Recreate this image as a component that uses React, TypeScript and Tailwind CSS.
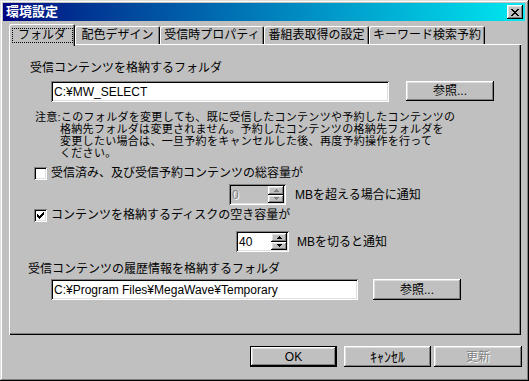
import type { ReactNode } from 'react'

const FONT = "font-['Liberation_Sans','Noto_Sans_CJK_JP',sans-serif]"
const RAISED =
  'shadow-[inset_-1px_-1px_#000,inset_1px_1px_#fff,inset_-2px_-2px_#808080,inset_2px_2px_#dfdfdf]'
const SUNKEN =
  'shadow-[inset_1px_1px_#808080,inset_-1px_-1px_#fff,inset_2px_2px_#000,inset_-2px_-2px_#dfdfdf]'
const DISABLED_TEXT = 'text-[#808080] [text-shadow:1px_1px_0_#fff]'

const TABS: Array<{ label: string; width: string; selected?: boolean }> = [
  { label: 'フォルダ', width: 'w-[66px]', selected: true },
  { label: '配色デザイン', width: 'w-[85px]' },
  { label: '受信時プロパティ', width: 'w-[104px]' },
  { label: '番組表取得の設定', width: 'w-[105px]' },
  { label: 'キーワード検索予約', width: 'w-[116px]' },
]

const NOTE_LINES = [
  '格納先フォルダは変更されません。予約したコンテンツの格納先フォルダを',
  '変更したい場合は、一旦予約をキャンセルした後、再度予約操作を行って',
  'ください。',
]

export default function App() {
  return (
    <div
      className={`${FONT} flex h-[381px] w-[529px] flex-col bg-[#c0c0c0] pl-[3px] pr-[4px] pt-[3px] text-[12px] text-black shadow-[inset_-1px_-1px_#000,inset_1px_1px_#dfdfdf,inset_-2px_-2px_#808080,inset_2px_2px_#fff]`}
    >
      <TitleBar />

      <div className="pl-[6px]">
        <div className="mt-[3px] flex h-[20px] items-end">
          {TABS.map((tab) => (
            <Tab key={tab.label} {...tab} />
          ))}
        </div>

        <div className="h-[291px] w-[512px] bg-[#c0c0c0] shadow-[inset_1px_1px_#fff,inset_-1px_-1px_#000,inset_-2px_-2px_#808080]">
          <div className="pl-[21px] pt-[17px] leading-[14px]">受信コンテンツを格納するフォルダ</div>

          <div className="mt-[6px] flex pl-[42px]">
            <TextField value="C:¥MW_SELECT" width="w-[338px]" />
            <Button label="参照..." className="ml-[17px] w-[88px] h-[20px]" />
          </div>

          <div className="mt-[9px] text-[11px] leading-[12px] tracking-[0.3px] whitespace-nowrap">
            <div className="pl-[26px]">注意:このフォルダを変更しても、既に受信したコンテンツや予約したコンテンツの</div>
            {NOTE_LINES.map((line) => (
              <div key={line} className="pl-[51px]">
                {line}
              </div>
            ))}
          </div>

          <div className="mt-[7px] flex h-[14px] items-center pl-[25px]">
            <Checkbox />
            <span className="ml-[4px] leading-[14px]">受信済み、及び受信予約コンテンツの総容量が</span>
          </div>

          <div className="mt-[4px] flex items-center pl-[220px]">
            <Spinner value="0" disabled editWidth="w-[37px]" />
            <span className="ml-[9px]">MBを超える場合に通知</span>
          </div>

          <div className="mt-[3px] flex h-[14px] items-center pl-[25px]">
            <Checkbox checked />
            <span className="ml-[4px] leading-[14px]">コンテンツを格納するディスクの空き容量が</span>
          </div>

          <div className="mt-[9px] flex items-center pl-[227px]">
            <Spinner value="40" editWidth="w-[33px]" />
            <span className="ml-[8px]">MBを切ると通知</span>
          </div>

          <div className="mt-[10px] pl-[19px] leading-[14px]">受信コンテンツの履歴情報を格納するフォルダ</div>

          <div className="mt-[3px] flex pl-[42px]">
            <TextField value="C:¥Program Files¥MegaWave¥Temporary" width="w-[307px]" />
            <Button label="参照..." className="ml-[15px] w-[88px] h-[21px]" />
          </div>
        </div>

        <div className="mt-[11px] flex w-[513px] justify-end">
          <div className="flex h-[21px] w-[87px] items-center justify-center border border-black">
            <Button label="OK" className="h-full w-full" />
          </div>
          <Button label="ｷｬﾝｾﾙ" className="ml-[7px] h-[21px] w-[87px] text-[14px]" />
          <Button label="更新" disabled className="ml-[3px] h-[21px] w-[88px]" />
        </div>
      </div>
    </div>
  )
}

function TitleBar() {
  return (
    <div className="flex h-[18px] items-center justify-between bg-linear-to-r from-[#000080] to-[#10e8f0] pl-[3px] pr-[2px]">
      <span className="text-[13px] leading-[18px] font-bold text-white">環境設定</span>
      <div className={`${RAISED} flex h-[14px] w-[16px] items-center justify-center bg-[#c0c0c0]`}>
        <svg width="8" height="7" viewBox="0 0 8 7" shapeRendering="crispEdges">
          <path
            d="M0 0h2v1H0zM6 0h2v1H6zM1 1h2v1H1zM5 1h2v1H5zM2 2h4v1H2zM3 3h2v1H3zM2 4h4v1H2zM1 5h2v1H1zM5 5h2v1H5zM0 6h2v1H0zM6 6h2v1H6z"
            fill="#000"
          />
        </svg>
      </div>
    </div>
  )
}

function Tab({ label, width, selected }: { label: string; width: string; selected?: boolean }) {
  if (selected) {
    return (
      <div
        className={`${width} relative z-10 -mb-[2px] flex h-[22px] items-start justify-center rounded-t-[2px] bg-[#c0c0c0] pt-[4px] shadow-[inset_1px_1px_#fff,inset_-1px_0_#000,inset_-2px_0_#808080]`}
      >
        <span className="flex h-[15px] w-[61px] items-center justify-center border border-dotted border-black leading-[13px]">
          {label}
        </span>
      </div>
    )
  }

  return (
    <div
      className={`${width} flex h-[18px] items-center justify-center rounded-t-[2px] bg-[#c0c0c0] shadow-[inset_1px_1px_#fff,inset_-1px_0_#000,inset_-2px_0_#808080]`}
    >
      <span className="leading-[14px]">{label}</span>
    </div>
  )
}

function TextField({ value, width }: { value: string; width: string }) {
  return (
    <div className={`${SUNKEN} ${width} flex h-[21px] items-center bg-white pl-[3px] leading-[14px]`}>
      {value}
    </div>
  )
}

function Button({ label, className, disabled }: { label: ReactNode; className?: string; disabled?: boolean }) {
  return (
    <div
      className={`${RAISED} flex items-center justify-center bg-[#c0c0c0] leading-[14px] ${disabled ? DISABLED_TEXT : ''} ${className ?? ''}`}
    >
      {label}
    </div>
  )
}

function Checkbox({ checked }: { checked?: boolean }) {
  return (
    <div className={`${SUNKEN} flex h-[13px] w-[13px] shrink-0 items-center justify-center bg-white`}>
      {checked ? (
        <svg width="7" height="7" viewBox="0 0 7 7" shapeRendering="crispEdges">
          <path d="M6 0h1v3H6zM5 1h1v3H5zM4 2h1v3H4zM0 2h1v3H0zM1 3h1v3H1zM2 4h1v3H2zM3 3h1v3H3z" fill="#000" />
        </svg>
      ) : null}
    </div>
  )
}

function Spinner({ value, disabled, editWidth }: { value: string; disabled?: boolean; editWidth: string }) {
  return (
    <div className={`${SUNKEN} flex h-[21px] p-[2px] ${disabled ? 'bg-[#c0c0c0]' : 'bg-white'}`}>
      <div className={`${editWidth} flex items-center pl-[1px] leading-[14px] ${disabled ? DISABLED_TEXT : ''}`}>
        {value}
      </div>
      <div className="flex w-[16px] flex-col">
        <SpinButton up disabled={disabled} />
        <SpinButton disabled={disabled} />
      </div>
    </div>
  )
}

function SpinButton({ up, disabled }: { up?: boolean; disabled?: boolean }) {
  const fill = disabled ? '#808080' : '#000'
  return (
    <div className={`${RAISED} flex flex-1 items-center justify-center bg-[#c0c0c0]`}>
      <svg width="5" height="3" viewBox="0 0 5 3" shapeRendering="crispEdges">
        <path d={up ? 'M2 0h1v1H2zM1 1h3v1H1zM0 2h5v1H0z' : 'M0 0h5v1H0zM1 1h3v1H1zM2 2h1v1H2z'} fill={fill} />
      </svg>
    </div>
  )
}
